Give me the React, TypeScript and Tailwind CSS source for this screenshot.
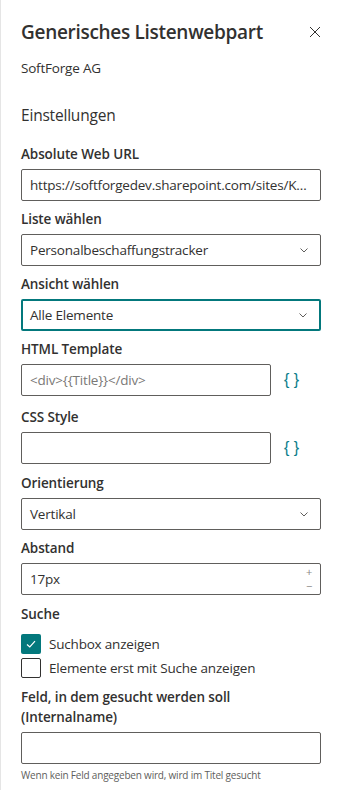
import React from "react";

const font = { fontFamily: '"Open Sans", "Liberation Sans", sans-serif' };

function Label({ children }: { children: React.ReactNode }) {
  return (
    <div className="text-[13.5px] font-semibold leading-[20px] tracking-[-0.1px] text-[#323130] pt-[5px] pb-[5px]">
      {children}
    </div>
  );
}

function Chevron() {
  return (
    <svg width="12" height="12" viewBox="0 0 12 12" className="shrink-0">
      <path d="M2.5 4.5 L6 8 L9.5 4.5" fill="none" stroke="#605e5c" strokeWidth="1" />
    </svg>
  );
}

function Braces() {
  return (
    <span
      style={{ fontFamily: '"Liberation Sans", sans-serif' }}
      className="w-[50px] shrink-0 flex justify-start pl-[13px] text-[16px] text-[#0a7d8a] leading-none"
    >
      {"{ }"}
    </span>
  );
}

function Dropdown({ value, focused }: { value: string; focused?: boolean }) {
  return (
    <div
      className={`h-[32px] rounded-[2px] flex items-center justify-between pr-[10px] text-[13.5px] tracking-[-0.2px] text-[#323130] ${
        focused ? "border-2 border-[#03787c] pl-[7px]" : "border border-[#605e5c] pl-[8px]"
      }`}
    >
      <span>{value}</span>
      <Chevron />
    </div>
  );
}

function TextBox({ value, placeholder }: { value?: string; placeholder?: string }) {
  return (
    <div className="h-[32px] rounded-[2px] border border-[#605e5c] flex items-center px-[8px] text-[13.5px] tracking-[-0.2px] text-[#323130] min-w-0 flex-1">
      {value ? (
        <span className="truncate">{value}</span>
      ) : (
        <span className="truncate text-[#7a7876]">{placeholder}</span>
      )}
    </div>
  );
}

function Checkbox({ checked, label }: { checked?: boolean; label: string }) {
  return (
    <div className="flex items-center gap-[8px] h-[20px] text-[13.5px] tracking-[-0.2px] text-[#323130]">
      <span
        className={`w-[20px] h-[20px] rounded-[2px] flex items-center justify-center shrink-0 ${
          checked ? "bg-[#03787c]" : "border border-[#323130]"
        }`}
      >
        {checked && (
          <svg width="12" height="12" viewBox="0 0 12 12">
            <path d="M2 6.5 L4.8 9 L10 3.2" fill="none" stroke="white" strokeWidth="1.2" />
          </svg>
        )}
      </span>
      <span>{label}</span>
    </div>
  );
}

export default function App() {
  return (
    <div style={font} className="w-[341px] h-[790px] bg-white border-l border-[#e5e5e5] overflow-hidden">
      <div className="flex items-center justify-between pl-[20px] pr-[20px] pt-[18px]">
        <h1 className="text-[19px] font-semibold leading-[28px] tracking-[-0.3px] text-[#323130]">
          Generisches Listenwebpart
        </h1>
        <svg width="12" height="12" viewBox="0 0 12 12">
          <path d="M1 1 L11 11 M11 1 L1 11" fill="none" stroke="#323130" strokeWidth="1" />
        </svg>
      </div>

      <div className="px-[20px]">
        <div className="text-[13.5px] tracking-[-0.2px] text-[#323130] mt-[12px] leading-[20px]">
          SoftForge AG
        </div>
        <div className="text-[15.5px] tracking-[-0.2px] text-[#323130] mt-[26px] leading-[22px] mb-[13px]">
          Einstellungen
        </div>

        <Label>Absolute Web URL</Label>
        <div className="flex">
          <TextBox value="https://softforgedev.sharepoint.com/sites/Kunden/Personal" />
        </div>

        <div className="mt-[3px]">
          <Label>Liste wählen</Label>
          <Dropdown value="Personalbeschaffungstracker" />
        </div>

        <div className="mt-[3px]">
          <Label>Ansicht wählen</Label>
          <Dropdown value="Alle Elemente" focused />
        </div>

        <div className="mt-[3px]">
          <Label>HTML Template</Label>
          <div className="flex items-center">
            <TextBox placeholder="<div>{{Title}}</div>" />
            <Braces />
          </div>
        </div>

        <div className="mt-[6px]">
          <Label>CSS Style</Label>
          <div className="flex items-center">
            <TextBox />
            <Braces />
          </div>
        </div>

        <div className="mt-[4px]">
          <Label>Orientierung</Label>
          <Dropdown value="Vertikal" />
        </div>

        <div className="mt-[3px]">
          <Label>Abstand</Label>
          <div className="h-[32px] rounded-[2px] border border-[#605e5c] flex items-center justify-between pl-[8px] text-[13.5px] tracking-[-0.2px] text-[#323130]">
            <span>17px</span>
            <div className="flex flex-col items-center justify-center w-[22px] text-[11px] leading-[14px] text-[#8a8886]">
              <span>+</span>
              <span>−</span>
            </div>
          </div>
        </div>

        <div className="mt-[4px]">
          <Label>Suche</Label>
          <div className="mt-[5px] flex flex-col gap-[4px]">
            <Checkbox checked label="Suchbox anzeigen" />
            <Checkbox label="Elemente erst mit Suche anzeigen" />
          </div>
        </div>

        <div className="mt-[4px]">
          <Label>
            Feld, in dem gesucht werden soll
            <br />
            (Internalname)
          </Label>
          <div className="flex">
            <TextBox />
          </div>
          <div className="text-[10px] tracking-[-0.2px] text-[#605e5c] mt-[4px] leading-[14px]">
            Wenn kein Feld angegeben wird, wird im Titel gesucht
          </div>
        </div>
      </div>
    </div>
  );
}
